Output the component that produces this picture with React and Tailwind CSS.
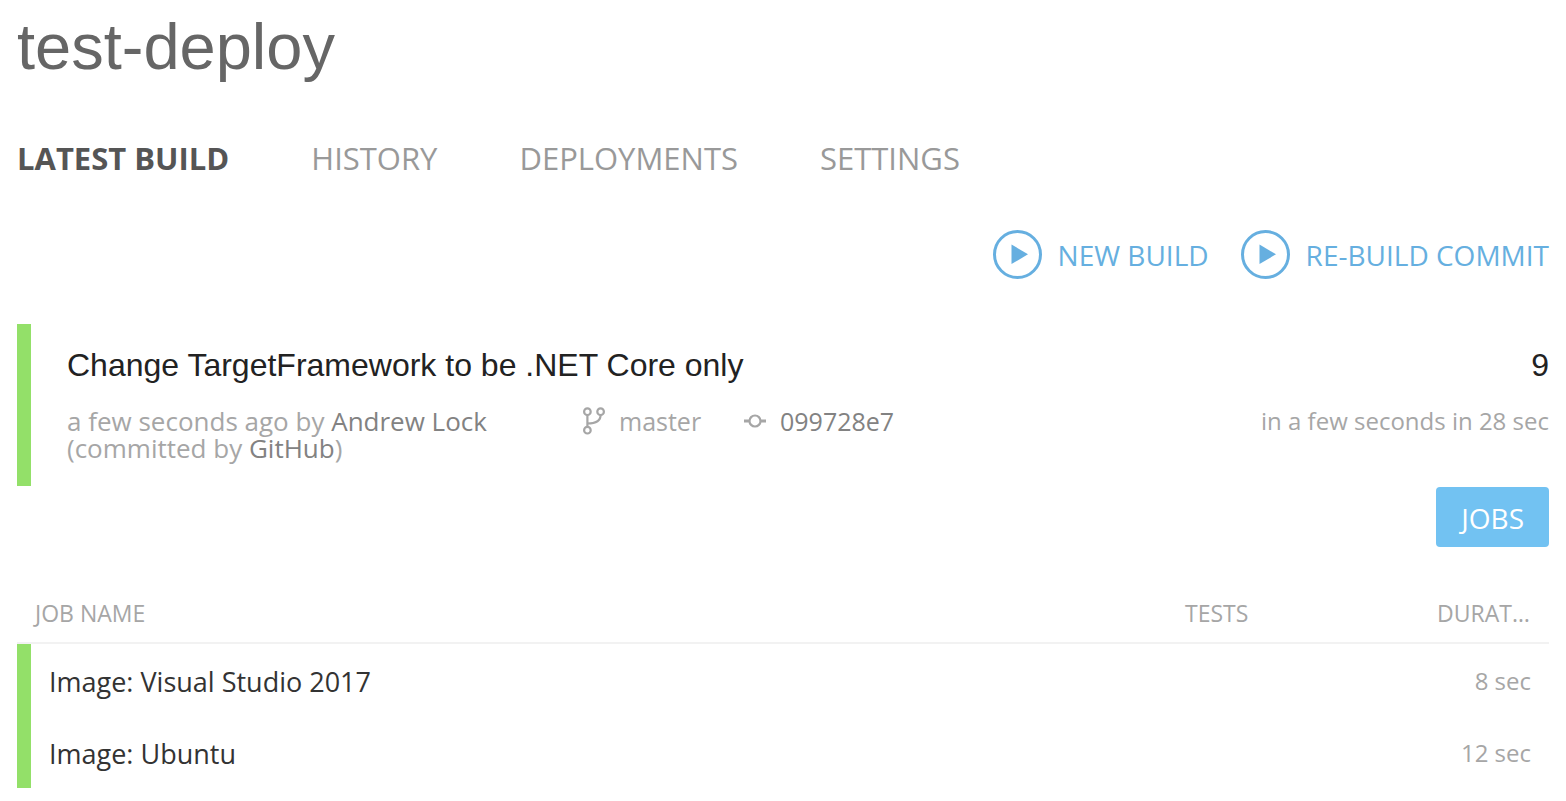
const tabs = ["Latest build", "History", "Deployments", "Settings"];

const jobs = [
  { name: "Image: Visual Studio 2017", duration: "8 sec" },
  { name: "Image: Ubuntu", duration: "12 sec" },
];

function PlayIcon() {
  return (
    <svg width="49" height="49" viewBox="0 0 49 49" aria-hidden="true">
      <circle cx="24.5" cy="24.5" r="23" fill="none" stroke="currentColor" strokeWidth="3" />
      <path d="M18.5 14.5v19.6L35 24.3z" fill="currentColor" />
    </svg>
  );
}

function BranchIcon() {
  return (
    <svg width="22" height="28" viewBox="0 0 22 28" fill="none" stroke="currentColor" strokeWidth="2.2" aria-hidden="true">
      <circle cx="4.4" cy="4.7" r="3.3" />
      <circle cx="17.6" cy="4.7" r="3.3" />
      <circle cx="4.4" cy="23.2" r="3.3" />
      <path d="M4.4 8v12M17.6 8c0 5.5-5 8.500-13.2 8.500" />
    </svg>
  );
}

function CommitIcon() {
  return (
    <svg width="22" height="14" viewBox="0 0 22 14" fill="none" stroke="currentColor" aria-hidden="true">
      <circle cx="11" cy="7" r="5.5" strokeWidth="2.2" />
      <path d="M0 7h5.4M16.6 7H22" strokeWidth="3" />
    </svg>
  );
}

function BuildAction({ children }) {
  return (
    <button type="button" className="flex items-center gap-4 text-[28px] leading-8 text-[#66afe0] uppercase">
      <PlayIcon />
      {children}
    </button>
  );
}

export default function App() {
  return (
    <div className="bg-white px-[17px] pt-[11px] pb-3 font-['Open_Sans',sans-serif] text-[#a6a6a6]">
      <h1 className="font-['Liberation_Sans',sans-serif] text-[65px] leading-[72px] text-[#666]">test-deploy</h1>

      <nav className="mt-[55px] flex gap-[82px] text-[31px] leading-10 uppercase">
        {tabs.map((tab, i) => (
          <a key={tab} href="#" className={i === 0 ? "font-bold text-[#555]" : "text-[#999]"}>{tab}</a>
        ))}
      </nav>

      <div className="mt-[52px] flex justify-end gap-8">
        <BuildAction>New build</BuildAction>
        <BuildAction>Re-build commit</BuildAction>
      </div>

      <section className="mt-[45px] border-l-14 border-[#93e069] pt-5 pb-6 pl-9">
        <div className="flex justify-between font-['Liberation_Sans',sans-serif] text-[32px] leading-[42px] text-[#222]">
          <h2>Change TargetFramework to be .NET Core only</h2>
          <span>9</span>
        </div>
        <div className="mt-[22px] flex items-start text-[25px] leading-[27px]">
          <p className="w-[516px] text-[26px]">
            a few seconds ago by <a href="#" className="text-[#828282]">Andrew Lock</a>
            <br />
            (committed by <a href="#" className="text-[#828282]">GitHub</a>)
          </p>
          <span className="flex h-[26px] w-[161px] items-center gap-[14px]">
            <BranchIcon />
            master
          </span>
          <span className="flex h-[26px] items-center gap-[14px]">
            <CommitIcon />
            <a href="#" className="text-[#828282]">099728e7</a>
          </span>
          <span className="ml-auto text-[24px] leading-[26px]">in a few seconds in 28 sec</span>
        </div>
      </section>

      <div className="mt-px flex justify-end">
        <button type="button" className="h-[60px] rounded bg-[#72c2f2] px-[25px] pt-0.5 text-[28px] leading-8 text-white">JOBS</button>
      </div>

      <table className="mt-[38px] w-full table-fixed border-separate border-spacing-0 text-left">
        <thead className="text-[23px] leading-7 uppercase">
          <tr>
            <th className="border-b-2 border-[#f2f2f2] px-[18px] pt-[14px] pb-[15px] font-normal">Job name</th>
            <th className="w-[252px] border-b-2 border-[#f2f2f2] px-[18px] pt-[14px] pb-[15px] font-normal">Tests</th>
            <th className="w-[130px] truncate border-b-2 border-[#f2f2f2] px-[18px] pt-[14px] pb-[15px] text-right font-normal">Duration</th>
          </tr>
        </thead>
        <tbody>
          {jobs.map((job) => (
            <tr key={job.name} className="h-[72px]">
              <td className="border-l-14 border-[#93e069] px-[18px] pt-1 text-[27px] leading-9 text-[#333]">{job.name}</td>
              <td />
              <td className="px-[18px] pt-0.5 text-right text-[24px] leading-9">{job.duration}</td>
            </tr>
          ))}
        </tbody>
      </table>
    </div>
  );
}
